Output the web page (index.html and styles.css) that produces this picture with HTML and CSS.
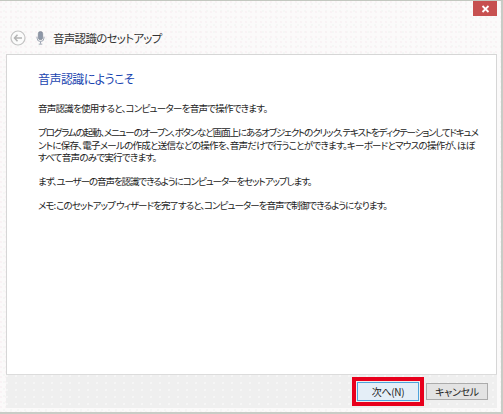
FILE: index.html
```html
<!DOCTYPE html>
<html lang="ja">
<head>
<meta charset="utf-8">
<title>音声認識のセットアップ</title>
<link rel="stylesheet" href="styles.css">
</head>
<body>
<div class="window">
  <div class="titlebar">
    <div class="close"><svg width="9" height="8" viewBox="0 0 9 8"><path d="M1.5 1 7.5 7M7.5 1 1.5 7" stroke="#fff" stroke-width="1.8" fill="none"/></svg></div>
  </div>
  <div class="nav">
    <svg class="back" width="16" height="16" viewBox="0 0 16 16"><circle cx="8" cy="8" r="7" fill="#fbfbfb" stroke="#c4c4c4" stroke-width="1.2"/><path d="M12 8H4.5M7.5 4.8 4.5 8 7.5 11.2" fill="none" stroke="#b4b4b4" stroke-width="1.5"/></svg>
    <svg class="mic" width="9" height="14" viewBox="0 0 10 16"><rect x="2.5" y="0.5" width="5" height="9.5" rx="2.5" fill="#8d97a8" stroke="#6f7785" stroke-width=".6"/><path d="M1 6.5V8a4 4 0 0 0 8 0V6.5M5 12v2.5M3 15h4" fill="none" stroke="#9aa2b0" stroke-width="1.1"/></svg>
    <span class="nav-title">音声認識のセットアップ</span>
  </div>
  <div class="panel">
    <h1 class="heading">音声認識にようこそ</h1>
    <p class="para">音声認識を使用すると、コンピューターを音声で操作できます。</p>
    <p class="para"><span class="tight">プログラムの起動、メニューのオープン、ボタンなど画面上にあるオブジェクトのクリック、テキストをディクテーションしてドキュメ</span><br>ントに保存、電子メールの作成と送信などの操作を、音声だけで行うことができます。キーボードとマウスの操作が、ほぼ<br>すべて音声のみで実行できます。</p>
    <p class="para tighter">まず、ユーザーの音声を認識できるようにコンピューターをセットアップします。</p>
    <p class="para snug">メモ: このセットアップ ウィザードを完了すると、コンピューターを音声で制御できるようになります。</p>
  </div>
  <div class="footer">
    <div class="next-ring"><button class="btn btn-primary">次へ(N)</button></div>
    <button class="btn">キャンセル</button>
  </div>
</div>
</body>
</html>
```
FILE: styles.css
```css
* { box-sizing: border-box; }
html, body { margin: 0; padding: 0; }
body { width: 503px; height: 414px; overflow: hidden; background: #fff; }
.window {
  width: 503px; height: 414px;
  display: flex; flex-direction: column;
  background-color: #fbfafa;
  background-image:
    radial-gradient(circle at 1px 1px, #f9f0f3 0.6px, transparent 1px),
    radial-gradient(circle at 4px 3px, #f3f5f3 0.6px, transparent 1px);
  background-size: 5px 5px, 7px 7px;
  border-top: 1px solid #c3c8c0;
  border-right: 2px solid #c8ccc6;
  border-bottom: 2px solid #c8ccc6;
  padding-bottom: 4px;
  font-family: "Noto Sans CJK JP", "Noto Sans", sans-serif;
  color: #1c1c1c;
}
.titlebar { height: 21px; display: flex; justify-content: flex-end; padding-right: 4px; flex: none; }
.close { width: 24px; height: 15px; background: #c75050; display: flex; align-items: center; justify-content: center; }
.nav { height: 32px; flex: none; display: flex; align-items: center; padding-left: 10px; }
.back { margin-right: 10px; }
.mic { margin-right: 8px; }
.nav-title { font-size: 11.5px; letter-spacing: -.7px; font-feature-settings: "palt"; color: #333; }
.panel {
  flex: 1; margin: 0 4px 0 6px;
  background: #fff;
  border: 1px solid #d6d6d6; border-bottom: 0;
  padding: 16px 16px 0 31px;
  overflow: hidden;
}
.heading { margin: 0 0 15px; font-size: 12px; line-height: 16px; font-weight: 400; color: #1a45b0; letter-spacing: -.55px; font-feature-settings: "palt"; }
.para { margin: 0 0 11.5px; font-size: 9.5px; line-height: 12.5px; white-space: nowrap; font-feature-settings: "palt"; letter-spacing: -.74px; color: #222; }
.tight { letter-spacing: -1.17px; }
.tighter { letter-spacing: -1.08px; }
.snug { letter-spacing: -.96px; }
.footer {
  height: 34px; flex: none; margin: 0 4px 0 6px;
  background-color: #efefef;
  background-image: radial-gradient(circle at 1px 1px, #f8f8f8 0.6px, transparent 1px);
  background-size: 9px 7px;
  border-top: 1px solid #dcdcdc;
  display: flex; align-items: center; justify-content: flex-end; gap: 2px; padding-right: 9px;
}
.next-ring { width: 72px; height: 29px; border: 4px solid #e8001c; padding: 1px; display: flex; }
.btn {
  width: 62px; height: 17px; padding: 0;
  background: #e3e3e3; border: 1px solid #ababab;
  font: inherit; font-size: 10px; line-height: 1; color: #222;
  font-feature-settings: "palt"; letter-spacing: -.3px;
}
.btn-primary { width: 62px; height: 19px; background: #e4eef7; border: 1px solid #4da3dc; }
```
